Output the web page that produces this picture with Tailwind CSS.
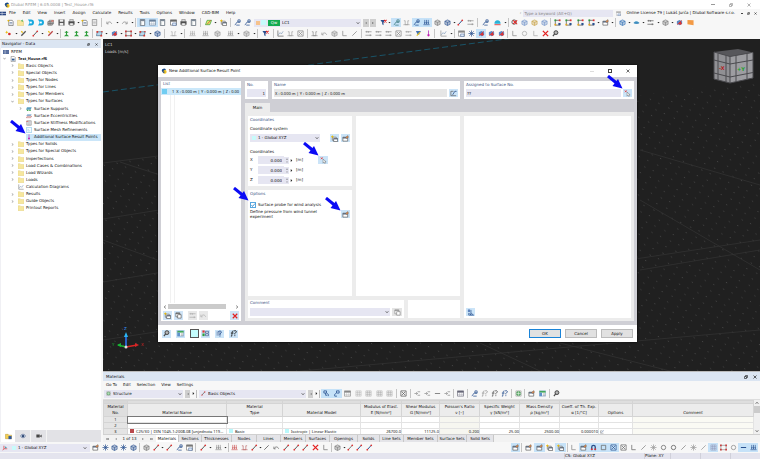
<!DOCTYPE html>
<html lang="en">
<head>
<meta charset="utf-8">
<title>Dlubal RFEM</title>
<script src="https://cdn.jsdelivr.net/npm/@tailwindcss/browser@4"></script>
</head>
<body class="flex h-screen flex-col overflow-hidden bg-[#f7f7f7] font-['DejaVu_Sans','Noto_Sans',sans-serif] text-[4px] leading-[6px] text-[#111]">
<svg class="hidden" aria-hidden="true">
  <symbol id="i-logo" viewBox="0 0 16 16"><path d="M2 6a6 5 0 0 1 11-2l-3 5-7 1z" fill="#174a86"/><circle cx="10" cy="10" r="5" fill="#f2c21b"/><path d="M4 4l4 1-2 4 4 1-2 4-4-3z" fill="#28508f"/></symbol>
  <symbol id="i-rfem" viewBox="0 0 20 14"><path d="M0 1h20v12H0z" fill="#294683"/><path d="M0 7h20M7 1v12" stroke="#fff" stroke-width="1.6"/></symbol>
  <symbol id="i-new" viewBox="0 0 16 16"><path d="M4 3h8l2 3v9H4z" fill="#fff" stroke="#555" stroke-width="1.4"/><path d="M6 8h6M6 11h6" stroke="#49658f" stroke-width="1.3"/><path d="M3 1l1 2 2 1-2 1-1 2-1-2-2-1 2-1z" fill="#e8b800"/></symbol>
  <symbol id="i-model" viewBox="0 0 16 16"><path d="M3 1h8l3 3v11H3z" fill="#fff" stroke="#555" stroke-width="1.2"/><path d="M5 7h7v5H5z" fill="#2e5b93"/></symbol>
  <symbol id="i-folder" viewBox="0 0 16 16"><path d="M1 3h6l2 2h6v10H1z" fill="#f8e6a0" stroke="#d9bf62"/><path d="M9 4l4-3v6z" fill="#45ad4b"/></symbol>
  <symbol id="i-data" viewBox="0 0 16 16"><path d="M1 3h6l2 2h6v8H1z" fill="#f2cf55" stroke="#b58c22"/><path d="M8 7h7v7H8z" fill="#2b57a0"/></symbol>
  <symbol id="i-dir" viewBox="0 0 16 14"><path d="M0 1h6l2 2h8v11H0z" fill="#f6e79f" stroke="#e2cd7c"/></symbol>
  <symbol id="i-sync" viewBox="0 0 16 16"><path d="M2 1h7a7 7 0 0 1 0 14H2l3-4V5z" fill="#19a9de"/><path d="M6 6h5v4H6z" fill="#fff"/></symbol>
  <symbol id="i-cube" viewBox="0 0 16 16"><path d="M2 5l6-3 6 3v7l-6 3-6-3z" fill="currentColor" fill-opacity=".35" stroke="currentColor" stroke-width="1.3"/><path d="M2 5l6 3 6-3M8 8v7" fill="none" stroke="currentColor" stroke-width="1.3"/></symbol>
  <symbol id="i-block" viewBox="0 0 16 16"><path d="M2 6h10v8H2z" fill="#ccc" stroke="#555" stroke-width="1.5"/><path d="M5 6V3h10v8h-3M2 10h10M7 6v8" fill="none" stroke="#555" stroke-width="1.4"/><path d="M10 3h5v3h-5z" fill="#e06b5c"/></symbol>
  <symbol id="i-save" viewBox="0 0 16 16"><path d="M1 1h14v14H1z" fill="#585858"/><path d="M4 1h8v5H4zM4 9h8v6H4z" fill="#eee"/></symbol>
  <symbol id="i-print" viewBox="0 0 16 16"><path d="M1 5h14v8H1z" fill="#505050"/><path d="M4 1h8v4H4zM4 9h8v6H4z" fill="#eee" stroke="#505050"/></symbol>
  <symbol id="i-page" viewBox="0 0 16 16"><path d="M3 1h10v14H3z" fill="#f8f8f8" stroke="#777" stroke-width="1.5"/><path d="M5 5h6M5 8h6M5 11h6" stroke="#888"/></symbol>
  <symbol id="i-undo" viewBox="0 0 16 16"><path d="M2 6v5h4M3 10c3-5 8-4 10 1" fill="none" stroke="currentColor" stroke-width="1.5"/></symbol>
  <symbol id="i-redo" viewBox="0 0 16 16"><path d="M14 6v5h-4M13 10c-3-5-8-4-10 1" fill="none" stroke="currentColor" stroke-width="1.5"/></symbol>
  <symbol id="i-tl" viewBox="0 0 16 16"><path d="M2 2h6v5H2zM9 8a4 4 0 0 1 3 6M6 7v5h4" fill="none" stroke="#28508f" stroke-width="1.8"/></symbol>
  <symbol id="i-tr" viewBox="0 0 16 16"><path d="M8 2h6v5H8zM7 8a4 4 0 0 0-3 6h5" fill="none" stroke="#28508f" stroke-width="1.8"/></symbol>
  <symbol id="i-panel" viewBox="0 0 16 16"><path d="M3 1h10v14H3z" fill="#fff" stroke="#5f6b78" stroke-width="1.8"/><path d="M3 1h10v4H3z" fill="#7b8795"/><path d="M6 6v8" stroke="#9aa" /></symbol>
  <symbol id="i-table" viewBox="0 0 16 16"><path d="M1 2h14v12H1z" fill="#fff" stroke="currentColor" stroke-width="1.5"/><path d="M1 2h14v4H1z" fill="currentColor"/><path d="M1 10h14M6 6v8M11 6v8" stroke="currentColor" stroke-opacity=".6"/></symbol>
  <symbol id="i-win" viewBox="0 0 16 16"><path d="M1 2h14v12H1z" fill="#fff" stroke="currentColor" stroke-width="1.6"/><path d="M1 2h14v4H1z" fill="currentColor"/><path d="M6 9h8v6H6z" fill="#dbe7f7" stroke="#2e5089"/></symbol>
  <symbol id="i-pencil" viewBox="0 0 16 16"><path d="M3 13L12 3" stroke="currentColor" stroke-width="2.2"/><circle cx="3" cy="13" r="2" fill="#d33"/><circle cx="12" cy="3" r="2" fill="#d33"/></symbol>
  <symbol id="i-member" viewBox="0 0 16 16"><path d="M3 13L13 3" stroke="currentColor" stroke-width="3"/><path d="M3 3l3 3" stroke="#e8b800" stroke-width="3"/></symbol>
  <symbol id="i-para" viewBox="0 0 16 16"><path d="M5 3h10l-4 10H1z" fill="#d7ef6a" stroke="#3c9a3c" stroke-width="1.6"/><path d="M5 12L13 3" stroke="#d33" stroke-width="1.6"/></symbol>
  <symbol id="i-node" viewBox="0 0 16 16"><circle cx="10" cy="9" r="3" fill="#d42a2a"/><path d="M4 1l1 3 3 1-3 1-1 3-1-3-3-1 3-1z" fill="#e8b800"/></symbol>
  <symbol id="i-area" viewBox="0 0 16 16"><path d="M3 4h11l-2 9H1z" fill="#b9d9ec" stroke="#39607f" stroke-width="1.4"/><path d="M1 2h4v4H1zM12 2h3v3h-3zM10 11h4v4h-4z" fill="#d53d34"/></symbol>
  <symbol id="i-support" viewBox="0 0 18 14"><path d="M3 2h14l-3 7H0z" fill="#5d9fc0"/><path d="M2 13l3-5 3 5zM9 13l3-5 3 5z" fill="#39a648"/></symbol>
  <symbol id="i-ecc" viewBox="0 0 18 14"><path d="M4 2h13l-3 5H1z" fill="#8db4d6"/><path d="M4 8h13l-3 4H1z" fill="none" stroke="#b04a4a" stroke-width="1.5"/></symbol>
  <symbol id="i-stiff" viewBox="0 0 16 16"><path d="M2 2h12v12H2z" fill="#e9e9ef" stroke="#777" stroke-width="1.3"/><path d="M6 2v12M10 2v12" stroke="#888"/><path d="M1 4h5" stroke="#d66" stroke-width="2"/></symbol>
  <symbol id="i-mesh" viewBox="0 0 16 16"><path d="M1 1h14v14H1z" fill="#f4fbff" stroke="#6fb6dd" stroke-width="1.4"/><path d="M5 5v6h5z" fill="none" stroke="#8fc4e2"/></symbol>
  <symbol id="i-frame" viewBox="0 0 16 16"><path d="M2 3h12v10H2z" fill="none" stroke="currentColor" stroke-width="1.5"/><path d="M0 1h4v4H0zM12 1h4v4h-4zM0 11h4v4H0zM12 11h4v4h-4z" fill="#c94141"/></symbol>
  <symbol id="i-load" viewBox="0 0 16 16"><path d="M1 13h14M4 2v8M8 2v8M12 2v8" stroke="currentColor" stroke-width="1.5"/><path d="M2 8l2 4 2-4zM6 8l2 4 2-4zM10 8l2 4 2-4z" fill="currentColor"/></symbol>
  <symbol id="i-green" viewBox="0 0 16 16"><path d="M8 2v9M4 5h8" stroke="#2f9e3c" stroke-width="2.4"/><path d="M2 14h12l-6-5z" fill="#2f9e3c"/></symbol>
  <symbol id="i-curve" viewBox="0 0 16 16"><path d="M2 4h3v9h6V4h3M1 13h14" fill="none" stroke="currentColor" stroke-width="1.5"/></symbol>
  <symbol id="i-dim" viewBox="0 0 16 16"><path d="M1 4h14M1 12h14M4 2v4M12 10v4M8 3v3" stroke="currentColor" stroke-width="1.6"/></symbol>
  <symbol id="i-filter" viewBox="0 0 16 16"><path d="M1 2h11L8 8v6l-3-2V8z" fill="currentColor"/><path d="M9 2l6 6M15 2L9 8" stroke="#e01f1f" stroke-width="2.4"/></symbol>
  <symbol id="i-redx" viewBox="0 0 16 16"><path d="M2 2l12 12M14 2L2 14" stroke="#e32020" stroke-width="3"/></symbol>
  <symbol id="i-zoomx" viewBox="0 0 16 16"><circle cx="7" cy="7" r="5" fill="none" stroke="#555" stroke-width="2"/><path d="M5 3l9 9M14 3L5 11" stroke="#e32020" stroke-width="2.4"/></symbol>
  <symbol id="i-dots" viewBox="0 0 16 16"><path d="M3 2v12M3 14h11M3 3h10" stroke="#444" stroke-width="1.5"/><path d="M1 1h4v4H1z" fill="#2f9e3c"/><path d="M11 1h4v4h-4z" fill="#d33"/><path d="M1 11h4v4H1z" fill="#e6a51b"/><path d="M10 9h5v5h-5z" fill="#28508f"/></symbol>
  <symbol id="i-diag" viewBox="0 0 16 16"><path d="M2 1v13h13" fill="none" stroke="currentColor" stroke-width="1.5"/><path d="M3 11l4-5 3 3 4-6" fill="none" stroke="#6a89ad" stroke-width="1.3"/></symbol>
  <symbol id="i-flag" viewBox="0 0 16 16"><path d="M2 14l5-7h7M5 14h8M9 2h5v5H9z" fill="none" stroke="currentColor" stroke-width="1.7"/></symbol>
  <symbol id="i-wing" viewBox="0 0 16 16"><path d="M1 9c4-5 9-5 14 0-4 3-10 3-14 0z" fill="#4aa0cd"/><path d="M3 9h10" stroke="#28508f"/></symbol>
  <symbol id="i-arch" viewBox="0 0 16 16"><path d="M1 11a7 8 0 0 1 14 0z" fill="#29b2d8"/><path d="M1 13h14" stroke="#d33" stroke-width="2"/></symbol>
  <symbol id="i-orange" viewBox="0 0 16 16"><path d="M1 2l14 1v11L1 12z" fill="#f39a45"/></symbol>
  <symbol id="i-pin" viewBox="0 0 16 16"><path d="M8 1v9" stroke="#c05bc8" stroke-width="2.4"/><circle cx="8" cy="12" r="2.6" fill="#c219b1"/></symbol>
  <symbol id="i-key" viewBox="0 0 16 16"><path d="M2 2h12l-4 5v3H6z" fill="#4372b5"/><path d="M4 13l8-8" stroke="#e6c21b" stroke-width="2.5"/></symbol>
  <symbol id="i-ball" viewBox="0 0 16 16"><path d="M2 5l6-3 6 3v6l-6 3-6-3z" fill="#5b86c0"/><path d="M3 13L13 3" stroke="#d33" stroke-width="2"/><circle cx="10" cy="10" r="3" fill="#d33"/></symbol>
  <symbol id="i-cursor" viewBox="0 0 16 16"><path d="M7 5v9l2-2 2 3 1-1-1-3h3z" fill="#fff" stroke="#555"/><path d="M2 1l4 4M6 1L2 5" stroke="#e03030" stroke-width="1.8"/></symbol>
  <symbol id="i-edit" viewBox="0 0 16 16"><path d="M2 3h6M2 3v10h12" fill="none" stroke="#555" stroke-width="1.5"/><path d="M6 11l5-8h4" fill="none" stroke="#2a4d86" stroke-width="1.8"/></symbol>
  <symbol id="i-wnew" viewBox="0 0 16 16"><path d="M3 5h9v7H3z" fill="#fff" stroke="#555" stroke-width="1.4"/><path d="M6 8h9v7H6z" fill="#fff" stroke="#444" stroke-width="1.4"/><path d="M6 8h9v2H6z" fill="#54657c"/><path d="M3 0l1 3 3 1-3 1-1 3-1-3-3-1 3-1z" fill="#e8b800"/></symbol>
  <symbol id="i-wedit" viewBox="0 0 16 16"><path d="M2 5h11v9H2z" fill="#fff" stroke="#555" stroke-width="1.5"/><path d="M2 5h11v3H2z" fill="#54657c"/><path d="M8 6l5-5 2 4-4 3z" fill="#d9884e" stroke="#555" stroke-width=".8"/></symbol>
  <symbol id="i-copy" viewBox="0 0 16 16"><path d="M2 2h9v9H2z" fill="#fff" stroke="currentColor" stroke-width="1.5"/><path d="M6 6h8v8H6z" fill="#fff" stroke="currentColor" stroke-width="1.5"/><path d="M2 2h9v2H2z" fill="currentColor"/></symbol>
  <symbol id="i-search" viewBox="0 0 16 16"><circle cx="9" cy="6" r="4.5" fill="#999" stroke="#444" stroke-width="2"/><path d="M6 9l-4 5" stroke="#444" stroke-width="2.6"/><path d="M9 4v4" stroke="#fff" stroke-width="1.4"/></symbol>
  <symbol id="i-units" viewBox="0 0 16 16"><path d="M1 2h14v12H1z" fill="#fff" stroke="#4b7db4"/><path d="M1 2h14v4H1z" fill="#42a85b"/><path d="M1 6h6v8H1z" fill="#5e92ca"/><path d="M9 9h5M9 12h5" stroke="#555"/></symbol>
  <symbol id="i-struct" viewBox="0 0 16 16"><path d="M1 1h5v5H1z" fill="#d33"/><path d="M1 8h5v6H1z" fill="#2f9e3c"/><path d="M8 3h7v4H8zM8 9h7v4H8z" fill="#fff" stroke="#2a4d86" stroke-width="1.5"/></symbol>
  <symbol id="i-help" viewBox="0 0 16 16"><path d="M1 3h10v10H1z" fill="#9ab2d0"/><path d="M5 5c1-4 9-3 7 1l-3 3v2M9 13v2" fill="none" stroke="#28508f" stroke-width="2"/></symbol>
  <symbol id="i-fx" viewBox="0 0 16 16"><path d="M8 2c-3-1-3 3-4 12H2M2 7h6" fill="none" stroke="currentColor" stroke-width="1.8"/><path d="M9 3c2-3 7-1 5 2l-3 3v2M11 12v2" fill="none" stroke="currentColor" stroke-width="2"/></symbol>
  <symbol id="i-sort" viewBox="0 0 16 16"><path d="M2 1h5v6H2z" fill="#5e83bd"/><path d="M9 2v11M6 10l3 4M4 9v5h11l-5-4" fill="none" stroke="#28508f" stroke-width="1.7"/></symbol>
  <symbol id="i-eye" viewBox="0 0 16 16"><path d="M1 8c4-6 10-6 14 0-4 6-10 6-14 0z" fill="#dce5f1" stroke="#2a4477" stroke-width="1.5"/><circle cx="8" cy="8" r="3" fill="#1e3766"/></symbol>
  <symbol id="i-cam" viewBox="0 0 16 16"><path d="M1 4h9v8H1zM11 7l4-3v8l-4-3z" fill="#444"/></symbol>
  <symbol id="i-xyz" viewBox="0 0 16 16"><path d="M5 2v8l-3 4M5 10h9" fill="none" stroke="#d33" stroke-width="1.8"/><path d="M7 3l6 3-4 4z" fill="#4a9fb7"/></symbol>
  <symbol id="i-star" viewBox="0 0 16 16"><path d="M8 1v14M1 8h14M3 3l10 10M13 3L3 13" stroke="currentColor" stroke-width="1.6"/></symbol>
  <symbol id="i-circ" viewBox="0 0 16 16"><circle cx="8" cy="8" r="5" fill="none" stroke="currentColor" stroke-width="1.7"/></symbol>
  <symbol id="i-sq" viewBox="0 0 16 16"><path d="M3 3h10v10H3z" fill="none" stroke="currentColor" stroke-width="1.7"/></symbol>
  <symbol id="i-boxx" viewBox="0 0 16 16"><path d="M2 2h12v12H2zM4 4l8 8M12 4l-8 8" fill="none" stroke="currentColor" stroke-width="1.6"/></symbol>
  <symbol id="i-grid" viewBox="0 0 16 16"><path d="M2 2h12v12H2zM2 6h12M2 10h12M6 2v12M10 2v12" fill="none" stroke="currentColor"/></symbol>
  <symbol id="i-magnet" viewBox="0 0 16 16"><path d="M4 14V7a4 4 0 0 1 8 0v7" fill="none" stroke="#2a4d86" stroke-width="3"/><path d="M2 12h4M10 12h4" stroke="#d33" stroke-width="3"/></symbol>
  <symbol id="i-corner" viewBox="0 0 16 16"><path d="M4 2v11h9" fill="none" stroke="currentColor" stroke-width="1.7"/></symbol>
  <symbol id="i-slash" viewBox="0 0 16 16"><path d="M3 13L13 3" stroke="currentColor" stroke-width="1.8"/></symbol>
  <symbol id="i-ins" viewBox="0 0 16 16"><path d="M1 8h7M8 4h6M8 12h6M5 5l3 3-3 3" fill="none" stroke="currentColor" stroke-width="1.6"/></symbol>
  <symbol id="i-dash" viewBox="0 0 16 16"><path d="M2 8h12" stroke="currentColor" stroke-width="2.4"/></symbol>
  <symbol id="i-globe" viewBox="0 0 16 16"><path d="M2 2h12v12H2z" fill="#fff" stroke="#777"/><circle cx="8" cy="8" r="5" fill="#63b16e" stroke="#347a40"/><path d="M3 8h10M8 3v10" stroke="#fff"/></symbol>
  <symbol id="i-down" viewBox="0 0 8 8"><path d="M1 2.500h6L4 6z" fill="#222"/></symbol>
  <symbol id="i-left" viewBox="0 0 8 8"><path d="M6 0v8L2 4z" fill="#444"/></symbol>
  <symbol id="i-right" viewBox="0 0 8 8"><path d="M2 0v8l4-4z" fill="#222"/></symbol>
  <symbol id="i-first" viewBox="0 0 12 8"><path d="M6 0v8L2 4zM11 0v8L7 4zM0 0h1v8H0z" fill="#444"/></symbol>
  <symbol id="i-last" viewBox="0 0 12 8"><path d="M1 0v8l4-4zM6 0v8l4-4zM11 0h1v8h-1z" fill="#444"/></symbol>
  <symbol id="i-chev" viewBox="0 0 8 8"><path d="M1 2l3 4 3-4" fill="none" stroke="#555" stroke-width="1.200"/></symbol>
  <symbol id="i-x" viewBox="0 0 8 8"><path d="M1 1l6 6M7 1L1 7" stroke="currentColor" stroke-width="1.300"/></symbol>
  <symbol id="i-rest" viewBox="0 0 8 8"><path d="M1 3h4v4H1zM3 3V1h4v4H5" fill="none" stroke="currentColor" stroke-width="1.200"/></symbol>
  <symbol id="i-arrow" viewBox="0 0 16 14"><path d="M1 1l8.500 7" stroke="#0b0bf5" stroke-width="3"/><path d="M15.500 13.500L5.500 11l5.500-7z" fill="#0b0bf5"/></symbol>
</svg>

<header>
  <div class="flex h-[9px] items-center bg-white px-1 text-[#999]">
    <svg class="mr-px size-[6px]"><use href="#i-logo"/></svg>
    <h1 class="grow">Dlubal RFEM | 6.05.0008 | Test_House.rf6</h1>
    <div class="flex items-center gap-[14px] pr-[5px] text-[#888]">
      <button aria-label="Minimize" class="h-px w-[4px] bg-[#999]"></button>
      <button aria-label="Restore"><svg class="size-[4px]"><use href="#i-rest"/></svg></button>
      <button aria-label="Close"><svg class="size-[4px]"><use href="#i-x"/></svg></button>
    </div>
  </div>
  <nav class="flex h-[8px] items-center">
    <svg class="mr-[3px] h-[5px] w-[6px]"><use href="#i-rfem"/></svg>
    <div class="flex grow gap-[7px]" id="menu"></div>
    <span class="mr-[2px] text-[#888]">›</span>
    <input aria-label="Keyword search" placeholder="Type a keyword (Alt+Q)" class="mr-[3px] h-[7px] w-[90px] bg-[#e6e6f2] px-px placeholder:text-[#888]">
    <svg class="mr-[5px] size-[5px] text-[#aaa]"><use href="#i-win"/></svg>
    <span class="mr-[6px]">Online License 79 | Lukáš Jurča | Dlubal Software s.r.o.</span>
    <div class="flex items-center gap-[4px] pr-[3px]">
      <span class="h-px w-[2px] bg-[#444]"></span>
      <svg class="size-[3px]"><use href="#i-rest"/></svg>
      <svg class="size-[3px]"><use href="#i-x"/></svg>
    </div>
  </nav>
  <div class="flex h-[11px] items-center pl-1">
    <div class="contents" data-bar="top1"></div>
    <div class="relative mr-[2px] flex h-[8px] w-[107px] items-center bg-[#e6e6f2] pl-[2px]">
      <i class="size-[4px] bg-[#f5c28c]"></i><i class="ml-px size-[5px] bg-[#c8fbfb]"></i>
      <b class="mx-[2px] h-[6px] w-[12px] bg-[#12ab50] text-center font-normal text-white">Qw</b>
      <select aria-label="Load case" class="grow appearance-none"><option>LC1</option></select>
      <svg class="pointer-events-none absolute right-px size-[4px]"><use href="#i-chev"/></svg>
    </div>
    <div class="mr-px flex gap-px">
      <button aria-label="Previous load case" class="flex h-[8px] w-[6px] items-center justify-center bg-[#cfcfcf]"><svg class="size-[2px]"><use href="#i-left"/></svg></button>
      <button aria-label="Next load case" class="flex h-[8px] w-[6px] items-center justify-center bg-[#cfcfcf]"><svg class="size-[2px]"><use href="#i-right"/></svg></button>
    </div>
    <div class="contents" data-bar="top1b"></div>
  </div>
  <div class="flex h-[11px] items-center pl-[2px]" data-bar="top2"></div>
</header>

<main class="flex min-h-0 grow gap-[2px]">
  <aside class="flex w-[101px] shrink-0 flex-col border-t border-[#ccc] bg-[#f0f0f4] pl-px">
    <div class="flex h-[8px] shrink-0 items-center bg-[#dbe5f2] px-px">
      <h2 class="grow">Navigator - Data</h2>
      <svg class="mr-[5px] size-[3px]"><use href="#i-rest"/></svg>
      <svg class="mr-[2px] size-[3px]"><use href="#i-x"/></svg>
    </div>
    <div class="grow bg-white">
      <ul id="tree" class="grid h-[164px] auto-rows-fr"></ul>
    </div>
    <div class="flex h-[12px] shrink-0 bg-[#e2e2e6]">
      <button aria-label="Data" class="flex w-[14px] items-center justify-center bg-white"><svg class="size-[7px]"><use href="#i-data"/></svg></button>
      <button aria-label="Display" class="flex w-[16px] items-center justify-center border-r border-[#f4f4f4]"><svg class="size-[6px]"><use href="#i-eye"/></svg></button>
      <button aria-label="Views" class="flex w-[16px] items-center justify-center border-r border-[#f4f4f4]"><svg class="size-[6px]"><use href="#i-cam"/></svg></button>
    </div>
  </aside>

  <div class="flex min-w-0 grow flex-col">
    <section aria-label="Work area" class="relative min-h-0 grow overflow-hidden bg-[#202020]">
      <div class="absolute left-[2px] top-[2px] leading-[7px] text-[#ccc]">LC1<br>Loads [m/s]</div>
      <svg class="size-full" viewBox="103 39 657 332" preserveAspectRatio="xMinYMin slice">
        <defs><pattern id="pts" width="13" height="11" patternUnits="userSpaceOnUse" patternTransform="rotate(-8) skewX(20)"><path d="M2 2h1M8 7h1" stroke="#505050" stroke-width=".8"/></pattern></defs>
        <path d="M103 163L760 80V371H103z" fill="url(#pts)"/>
        <path d="M103 163l55-7M120 162l40 13M103 219l56-9M103 282l60-10M103 340l657-100M103 240l60 22M300 371L760 330M480 343l60 28M560 343l110 28M640 200l120 70M640 270l120-20M640 150l120 35" fill="none" stroke="#323232" stroke-width=".8"/>
        <path d="M103 92L510 38.500" stroke="#186078" stroke-width=".8" stroke-dasharray="6 3"/>
        <path d="M126 346v-11" stroke="#2a7bff" stroke-width="1.500"/><path d="M126 332l2 5h-4z" fill="#2ab6f5"/>
        <path d="M126 347l-8-2" stroke="#18b435" stroke-width="1.500"/><path d="M117 345l4-2v4z" fill="#18b435"/>
        <path d="M126 347l11-2" stroke="#d92525" stroke-width="1.500"/><path d="M139 345l-4-2v4z" fill="#d92525"/>
        <circle cx="126" cy="347" r="1.500" fill="#ddd"/>
        <g font-size="4"><text x="124" y="330" fill="#3894ff">Z</text><text x="112" y="346" fill="#18b435">Y</text><text x="141" y="346" fill="#d92525">X</text></g>
        <path d="M714 52l24-3 15 3.500-23 4z" fill="#57575b"/>
        <path d="M714 52l16 4.500V83l-16-4z" fill="#909094"/><path d="M730 56.500l23-4V78l-23 5z" fill="#9d9da1"/>
        <path d="M714 52l16 4.500 22-4M730 56.500V83M718 53.500V80M726 55.500V82M736 55.500V81.500M747 53.500V79.500M714 60l16 4 23-4M714 73l16 4 23-4.500M714 52v27l16 4 23-5V52.500" fill="none" stroke="#4b4b4f"/>
        <g font-size="5" font-weight="700"><text x="719" y="70" fill="#b42222">-X</text><text x="737" y="71" fill="#16a325">+Y</text></g>
      </svg>
    </section>

    <section class="flex h-[71px] shrink-0 flex-col border-t border-[#bbb]">
      <div class="flex h-[9px] shrink-0 items-center bg-[#dbe5f2] px-[3px]">
        <h2 class="grow">Materials</h2>
        <svg class="mr-[5px] size-[4px]"><use href="#i-rest"/></svg>
        <svg class="size-[4px]"><use href="#i-x"/></svg>
      </div>
      <div class="flex h-[7px] shrink-0 items-center gap-[6px] px-[3px]" id="tmenu"></div>
      <div class="flex h-[11px] shrink-0 items-center pl-px">
        <div class="relative mr-[2px] flex h-[8px] w-[79px] items-center bg-[#e6e6f2] pl-[2px]">
          <svg class="mr-[2px] size-[5px]"><use href="#i-globe"/></svg>
          <select aria-label="Table category" class="grow appearance-none"><option>Structure</option></select>
          <svg class="pointer-events-none absolute right-px size-[4px]"><use href="#i-chev"/></svg>
        </div>
        <button aria-label="Previous category" class="flex h-[8px] w-[5px] items-center justify-center bg-[#cfcfcf]"><svg class="size-[2px]"><use href="#i-left"/></svg></button>
        <button aria-label="Next category" class="flex h-[8px] w-[7px] items-center justify-center border-r border-[#bbb]"><svg class="size-[3px]"><use href="#i-right"/></svg></button>
        <div class="relative mx-[2px] flex h-[8px] w-[107px] items-center bg-[#e6e6f2] pl-[2px]">
          <svg class="mr-[2px] size-[5px] text-[#555]"><use href="#i-pencil"/></svg>
          <select aria-label="Table" class="grow appearance-none"><option>Basic Objects</option></select>
          <svg class="pointer-events-none absolute right-px size-[4px]"><use href="#i-chev"/></svg>
        </div>
        <button aria-label="Previous table" class="flex h-[8px] w-[5px] items-center justify-center bg-[#cfcfcf]"><svg class="size-[2px]"><use href="#i-left"/></svg></button>
        <button aria-label="Next table" class="flex h-[8px] w-[7px] items-center justify-center border-r border-[#bbb]"><svg class="size-[3px]"><use href="#i-right"/></svg></button>
        <div class="contents" data-bar="tbl"></div>
      </div>
      <div class="flex min-h-0 grow overflow-hidden border-t border-[#ddd] bg-white">
        <div class="min-w-0 grow overflow-hidden">
        <table class="w-full table-fixed border-collapse text-center [&_td]:border [&_td]:border-[#e3e3e3] [&_td]:p-0 [&_th]:whitespace-nowrap [&_th]:border [&_th]:border-[#d4d4d4] [&_th]:p-0 [&_th]:align-bottom [&_th]:font-normal">
          <colgroup><col class="w-[24px]"><col class="w-[99px]"><col class="w-[56px]"><col class="w-[78px]"><col class="w-[41px]"><col class="w-[38px]"><col class="w-[40px]"><col class="w-[40px]"><col class="w-[40px]"><col class="w-[39px]"><col class="w-[34px]"><col></colgroup>
          <thead class="bg-[#ececec]">
            <tr class="h-[3px] bg-[#dedede] leading-[2px]"><th class="bg-[#d8d8d8]"></th><th></th><th></th><th></th><th></th><th></th><th></th><th></th><th></th><th></th><th></th><th></th></tr>
            <tr class="leading-[6px]"><th class="bg-[#dedede]">Material<br>No.</th><th>Material Name</th><th>Material<br>Type</th><th>Material Model</th><th>Modulus of Elast.<br>E [N/mm²]</th><th>Shear Modulus<br>G [N/mm²]</th><th>Poisson's Ratio<br>ν [–]</th><th>Specific Weight<br>γ [kN/m³]</th><th>Mass Density<br>ρ [kg/m³]</th><th>Coeff. of Th. Exp.<br>α [1/°C]</th><th>Options</th><th>Comment</th></tr>
          </thead>
          <tbody class="font-['Noto_Sans',sans-serif]">
            <tr class="h-[6px] leading-[5px]"><th class="bg-[#e4e4e4]">1</th><td class="outline outline-[#777]"></td><td></td><td></td><td></td><td></td><td class="bg-[#f6f6f0]"></td><td></td><td></td><td></td><td></td><td class="bg-[#fafaf4]"></td></tr>
            <tr class="h-[6px] leading-[5px]"><th class="bg-[#e4e4e4]">2</th><td></td><td></td><td></td><td></td><td></td><td class="bg-[#f6f6f0]"></td><td></td><td></td><td></td><td></td><td class="bg-[#fafaf4]"></td></tr>
            <tr class="h-[6px] leading-[5px]"><th class="bg-[#e4e4e4]">3</th>
              <td class="overflow-hidden whitespace-nowrap text-left"><i class="mx-[2px] inline-block size-[4px] bg-[#b9494c]"></i>C25/30 | DIN 1045-1:2008-08 [unjednota 119...</td>
              <td class="text-left"><i class="mx-[2px] inline-block size-[4px] bg-[#b9f8fb]"></i>Basic</td>
              <td class="text-left"><i class="mx-[2px] inline-block size-[4px] bg-[#b9f8fb]"></i>Isotropic | Linear Elastic</td>
              <td class="text-right">26700.0</td><td class="text-right">11125.0</td><td class="bg-[#f6f6f0] text-right">0.200</td><td class="text-right">25.00</td><td class="text-right">2500.00</td><td class="text-right">0.000010</td><td><svg class="ml-px size-[4px]"><use href="#i-edit"/></svg></td><td class="bg-[#fafaf4]"></td></tr>
          </tbody>
        </table>
        </div>
        <div class="flex w-[7px] flex-col items-center bg-[#f0f0f0] py-px">
          <svg class="size-[4px] rotate-180"><use href="#i-chev"/></svg>
          <div class="mt-px h-[7px] w-[6px] bg-[#cbcbcb]"></div>
          <div class="grow"></div>
          <svg class="size-[4px]"><use href="#i-chev"/></svg>
        </div>
      </div>
      <div class="flex h-[8px] shrink-0 items-center border-t border-[#d0d0d0] bg-[#f2f2f2]">
        <div class="flex w-[53px] items-center justify-between px-[3px]"><svg class="h-[2px] w-[3px]"><use href="#i-first"/></svg><svg class="size-[2px]"><use href="#i-left"/></svg><span>1 of 13</span><svg class="size-[2px]"><use href="#i-right"/></svg><svg class="h-[2px] w-[3px]"><use href="#i-last"/></svg></div>
        <div class="flex" id="tabs"></div>
      </div>
    </section>
  </div>
</main>

<footer>
  <div class="flex h-[11px] items-center">
    <div class="relative flex h-[8px] w-[90px] items-center bg-[#e6e6f2] pl-[2px]">
      <svg class="mr-[4px] size-[6px]"><use href="#i-xyz"/></svg><i class="mr-[2px] size-[4px] bg-[#c8fbfb]"></i>
      <select aria-label="Coordinate system in use" class="grow appearance-none"><option>1 - Global XYZ</option></select>
      <svg class="pointer-events-none absolute right-[3px] size-[4px]"><use href="#i-chev"/></svg>
    </div>
    <div class="contents" data-bar="bot"></div>
    <div class="grow"></div>
    <div class="contents" data-bar="botr"></div>
  </div>
  <div class="flex h-[6px] items-center bg-[#e4e4ee]">
    <div class="grow"></div>
    <span class="w-[80px] border-l border-[#d0d0da]">CS: Global XYZ</span>
    <span class="w-[26px] border-l border-[#d0d0da]">Plane: XY</span>
    <span class="h-[6px] w-[30px] border-l border-[#d0d0da]"></span>
    <span class="h-[6px] w-[30px] border-l border-[#d0d0da]"></span>
    <span class="h-[6px] w-[30px] border-l border-[#d0d0da]"></span>
  </div>
</footer>

<section role="dialog" aria-labelledby="dlg" class="absolute left-[158px] right-[123px] top-[65px] flex h-[277px] flex-col bg-white shadow-[0_0_2px_#000]">
  <div class="flex h-[12px] shrink-0 items-center px-[3px]">
    <svg class="mr-[2px] size-[6px]"><use href="#i-logo"/></svg>
    <h2 id="dlg" class="grow">New Additional Surface Result Point</h2>
    <div class="flex items-center gap-[14px] pr-[4px] text-[#222]">
      <button aria-label="Minimize" class="h-px w-[4px] bg-[#ddd]"></button>
      <button aria-label="Maximize" class="size-[4px] border border-[#444]"></button>
      <button aria-label="Close"><svg class="size-[4px]"><use href="#i-x"/></svg></button>
    </div>
  </div>
  <div class="flex min-h-0 grow gap-[4px] bg-[#cfcfd5] px-[3px] py-[4px]">
    <div class="flex w-[80px] shrink-0 flex-col bg-white">
      <h3 class="h-[7px] px-[2px] text-[#3b5382]">List</h3>
      <div class="flex h-[7px] items-center overflow-hidden whitespace-nowrap bg-[#cbe8fa] pl-px font-['Noto_Sans',sans-serif]"><i class="mr-[5px] size-[5px] shrink-0 bg-[#71cdf2]"></i><span class="mr-[2px]">1</span>X : 0.000 m | Y : 0.000 m | Z : 0.00</div>
      <div class="ml-[9px] w-[5px] grow border-x border-[#f1f1f1]"></div>
      <div class="flex h-[7px] items-center gap-px px-[2px]">
        <svg class="size-[4px] rotate-90"><use href="#i-chev"/></svg><div class="h-[5px] w-[58px] bg-[#cbcbcb]"></div><div class="grow"></div><svg class="size-[4px] -rotate-90"><use href="#i-chev"/></svg>
      </div>
      <div class="flex h-[11px] items-center gap-[2px] px-[2px] text-[#555]">
        <button aria-label="New point" class="flex size-[9px] items-center justify-center bg-[#cfe4f7]"><svg class="size-[7px]"><use href="#i-wnew"/></svg></button>
        <button aria-label="Copy point" class="flex size-[9px] items-center justify-center bg-[#cfe4f7]"><svg class="size-[7px]"><use href="#i-copy"/></svg></button>
        <button aria-label="Merge" class="ml-[3px] flex size-[9px] items-center justify-center bg-[#e8e8e8] text-[#aaa]"><svg class="size-[7px]"><use href="#i-dim"/></svg></button>
        <button aria-label="Split" class="flex size-[9px] items-center justify-center bg-[#e8e8e8] text-[#aaa]"><svg class="size-[7px]"><use href="#i-undo"/></svg></button>
        <div class="grow"></div>
        <button aria-label="Delete" class="flex size-[9px] items-center justify-center bg-[#cfe4f7]"><svg class="size-[6px]"><use href="#i-redx"/></svg></button>
      </div>
    </div>
    <div class="flex min-w-0 grow flex-col">
      <div class="flex h-[18px] shrink-0 gap-[4px]">
        <div class="w-[23px] bg-white px-[2px]"><label for="no" class="block h-[8px] leading-[8px] text-[#3b5382]">No.</label><input id="no" value="1" class="block h-[8px] w-full bg-[#e6e6f2] px-px text-right"></div>
        <div class="grow bg-white px-[2px]"><label for="nm" class="block h-[8px] leading-[8px] text-[#3b5382]">Name</label>
          <div class="flex gap-[2px]"><input id="nm" value="X : 0.000 m | Y : 0.000 m | Z : 0.000 m" class="h-[8px] min-w-0 grow bg-[#e6e6e6] px-px font-['Noto_Sans',sans-serif]"><button aria-label="Edit name" class="flex h-[8px] w-[9px] items-center justify-center bg-[#cbe4f8]"><svg class="size-[7px]"><use href="#i-edit"/></svg></button></div></div>
        <div class="w-[170px] bg-white px-[2px]"><label for="as" class="block h-[8px] leading-[8px] text-[#3b5382]">Assigned to Surface No.</label>
          <div class="flex gap-[2px]"><input id="as" value="??" class="h-[8px] min-w-0 grow bg-[#e6e6f2] px-px"><button aria-label="Select surfaces" class="flex h-[8px] w-[9px] items-center justify-center bg-[#cbe4f8]"><svg class="size-[7px]"><use href="#i-cursor"/></svg></button></div></div>
      </div>
      <button class="mt-[4px] h-[9px] w-[25px] shrink-0 bg-[#ececec]">Main</button>
      <div class="flex min-h-0 grow gap-[4px] bg-[#ececec] px-[3px] pb-[3px] pt-[4px]">
        <div class="grid min-w-0 grow grid-cols-[104px_minmax(0,1fr)] grid-rows-[1fr_18px] gap-[4px]">
          <div class="flex flex-col gap-[4px]">
            <fieldset class="h-[70px] bg-white px-[2px]">
              <legend class="float-left h-[7px] w-full leading-[7px] text-[#3b5382]">Coordinates</legend>
              <div class="clear-both pt-[3px]">
                <label for="cs" class="block h-[8px]">Coordinate system</label>
                <div class="flex h-[8px] items-center">
                  <div class="relative flex h-[8px] w-[70px] items-center bg-[#e6e6f2] pl-[2px]"><i class="mr-[2px] size-[4px] bg-[#c8fbfb]"></i><select id="cs" class="grow appearance-none"><option>1 - Global XYZ</option></select><svg class="pointer-events-none absolute right-px size-[4px]"><use href="#i-chev"/></svg></div>
                  <div class="grow"></div>
                  <button aria-label="New coordinate system" class="mr-[2px] flex h-[8px] w-[9px] items-center justify-center bg-[#cbe4f8]"><svg class="size-[7px]"><use href="#i-wnew"/></svg></button>
                  <button aria-label="Edit coordinate system" class="flex h-[8px] w-[9px] items-center justify-center bg-[#cbe4f8]"><svg class="size-[7px]"><use href="#i-wedit"/></svg></button>
                </div>
                <div class="mb-px mt-[7px] h-[6px]">Coordinates</div>
                <div class="flex">
                  <div class="flex flex-col gap-[2px]" id="coords"></div>
                  <button aria-label="Pick point" class="ml-[15px] flex h-[8px] w-[10px] items-center justify-center bg-[#cbe4f8]"><svg class="size-[7px]"><use href="#i-cursor"/></svg></button>
                </div>
              </div>
            </fieldset>
            <fieldset class="grow bg-white px-[2px]">
              <legend class="float-left h-[7px] w-full leading-[8px] text-[#3b5382]">Options</legend>
              <div class="clear-both pt-[4px]">
                <label class="flex h-[8px] items-center gap-[2px]"><span class="relative flex"><input type="checkbox" checked class="size-[6px] appearance-none border border-[#5aa8e0] bg-white"><svg class="pointer-events-none absolute inset-0 size-[6px]" viewBox="0 0 12 12"><path d="M3 6l2 3 5-6" fill="none" stroke="#1c7ac4" stroke-width="1.5"/></svg></span>Surface probe for wind analysis</label>
                <div class="flex items-center justify-between"><p class="w-[76px] leading-[5px]">Define pressure from wind tunnel experiment</p><button aria-label="Define pressure" class="flex h-[8px] w-[9px] items-center justify-center bg-[#cbe4f8]"><svg class="size-[7px]"><use href="#i-wedit"/></svg></button></div>
              </div>
            </fieldset>
          </div>
          <div class="bg-white"></div>
          <div class="col-span-2 flex gap-[4px]">
            <div class="grow bg-white px-[2px]"><label for="cm" class="block h-[8px] text-[#3b5382]">Comment</label>
              <div class="flex gap-[2px]"><div class="relative flex h-[8px] grow items-center bg-[#e6e6f2]"><select id="cm" class="w-full appearance-none"><option></option></select><svg class="pointer-events-none absolute right-px size-[4px]"><use href="#i-chev"/></svg></div><button aria-label="Apply comment" class="flex h-[8px] w-[10px] items-center justify-center bg-[#e4e4e4] text-[#888]"><svg class="size-[7px]"><use href="#i-copy"/></svg></button></div></div>
            <div class="w-[52px] bg-white"></div>
          </div>
        </div>
        <div class="flex w-[167px] items-end bg-white p-[2px]"><button aria-label="Sort" class="flex h-[8px] w-[9px] items-center justify-center bg-[#cbe4f8]"><svg class="size-[7px]"><use href="#i-sort"/></svg></button></div>
      </div>
    </div>
  </div>
  <div class="flex h-[17px] shrink-0 items-center px-[4px]">
    <div class="flex grow items-center gap-[5px]">
      <button aria-label="Help search" class="flex h-[8px] w-[9px] items-center justify-center bg-[#cbe4f8]"><svg class="size-[7px]"><use href="#i-search"/></svg></button>
      <button aria-label="Units" class="flex h-[8px] w-[9px] items-center justify-center bg-[#cbe4f8]"><svg class="size-[7px]"><use href="#i-units"/></svg></button>
      <div class="flex items-center gap-[2px]"><button aria-label="Color" class="size-[9px] border border-[#555] bg-[#c4fdfd]"></button>
      <button aria-label="Structure" class="flex h-[8px] w-[9px] items-center justify-center bg-[#cbe4f8]"><svg class="size-[7px]"><use href="#i-struct"/></svg></button></div>
      <button aria-label="Info" class="flex h-[8px] w-[9px] items-center justify-center bg-[#cbe4f8]"><svg class="size-[7px]"><use href="#i-help"/></svg></button>
      <button aria-label="Formula" class="flex h-[8px] w-[9px] items-center justify-center bg-[#cbe4f8]"><svg class="size-[7px]"><use href="#i-fx"/></svg></button>
    </div>
    <div class="flex gap-[4px]">
      <button class="h-[9px] w-[32px] border border-[#1a83d8] bg-[#e1e1e1] leading-[6px]">OK</button>
      <button class="h-[9px] w-[32px] border border-[#bbb] bg-[#e1e1e1] leading-[6px]">Cancel</button>
      <button class="h-[9px] w-[32px] border border-[#bbb] bg-[#e1e1e1] leading-[6px]">Apply</button>
    </div>
  </div>
</section>

<svg class="pointer-events-none absolute left-[10px] top-[120px] h-[14px] w-[16px]"><use href="#i-arrow"/></svg>
<svg class="pointer-events-none absolute left-[303px] top-[142px] h-[14px] w-[16px]"><use href="#i-arrow"/></svg>
<svg class="pointer-events-none absolute left-[233px] top-[187px] h-[14px] w-[16px]"><use href="#i-arrow"/></svg>
<svg class="pointer-events-none absolute left-[325px] top-[197px] h-[14px] w-[16px]"><use href="#i-arrow"/></svg>
<svg class="pointer-events-none absolute right-[137px] top-[75px] h-[14px] w-[16px]"><use href="#i-arrow"/></svg>

<script>
const $ = s => document.querySelector(s);
// Toolbar groups: [width, "icon icon ..."]. "v" is a drop-down marker, a leading "*" marks an active tool, a trailing colour tints the icon.
const bars = {
  top1: [[98,'new folder sync sync block save print v new page'],[34,'undo:#777 v redo:#777 v'],[65,'*panel *table:#69809b panel win:#666 print panel'],[30,'para v wnew'],[23,'flag:#28508f flag:#28508f']],
  top1b: [[101,'filter:#28508f v *flag:#3a7a80 curve:#999 *flag:#28508f *load:#28508f cube:#777 cube:#28508f v pencil:#28508f dim:#888'],[31,'flag:#28508f arch v'],[42,'zoomx cube:#6f93c9 cube:#c79f40 cube:#6f93c9'],[65,'dots dots dots dots v wedit v'],[82,'cube:#2d6db5 v wing v dim:#555 v cube:#777 v ball orange']],
  top2: [[59,'node v member:#555 pencil:#555 v member:#b44 v'],[32,'green green green'],[72,'area v ball v frame:#555 v area v cube:#28508f'],[20,'curve:#aaa v'],[73,'load:#aaa load:#999 cube:#999 load:#999 v cube:#999 v'],[16,'filter:#28508f'],[34,'diag:#555 curve:#999 boxx:#888'],[54,'curve:#888 undo:#888 cube:#999 corner:#888 slash:#888'],[73,'dim:#888 dim:#888 dim:#888 boxx:#888 dim:#999 key pin'],[20,'diag:#888 v'],[53,'win:#888 star:#28508f *ball ball ball'],[55,'corner:#888 circ:#aaa corner:#aaa redx search']],
  tbl: [[77,'*tl *tr table:#888 grid:#aaa grid:#999 grid:#999 grid:#999'],[14,'boxx:#555'],[43,'ins:#888 ins:#888 dash:#888 ins:#888'],[14,'table:#667'],[44,'flag:#28508f fx:#999 fx:#555 fx:#28508f'],[13,'globe'],[25,'wedit units'],[13,'search']],
  bot: [[50,'wedit:#555 star:#28508f cube:#28508f star:#28508f cube:#28508f'],[56,'cube:#777 pencil:#555 v pencil:#555 flag:#28508f win:#777'],[33,'pencil:#555 v load:#888 v'],[103,'load:#c55 curve:#b66 pencil:#555 v slash:#555 undo:#555 pencil:#555 pencil:#555 pencil:#555 redx corner:#777'],[44,'cube:#777 v pencil:#777 pencil:#28508f pencil:#28508f']],
  botr: [[12,'*wedit'],[46,'wedit *wedit wnew *wnew'],[192,'corner:#888 *wedit *magnet *sq:#666 *boxx:#28508f boxx:#666 corner:#666 slash:#888 star:#999 circ:#666 circ:#555 slash:#888 star:#999 slash:#999 *grid:#88a frame:#888 circ:#888 *dash:#28508f *load:#28508f']]
};
for (const [key, groups] of Object.entries(bars)) {
  $(`[data-bar=${key}]`).innerHTML = groups.map(([w, items]) =>
    `<div class="flex h-[9px] shrink-0 items-center justify-between border-r border-[#c4c4c4] px-px last:border-transparent" style="width:${w}px">` +
    items.split(' ').map(t => {
      if (t === 'v') return '<button aria-label="More options"><svg class="size-[3px]"><use href="#i-down"/></svg></button>';
      const on = t[0] === '*', [name, color] = t.replace('*', '').split(':');
      return `<button aria-label="${name}" class="flex h-[9px] min-w-0 grow items-center justify-center ${on ? 'bg-[#c6e2f8]' : ''}" style="color:${color || '#555'}"><svg class="size-[7px]"><use href="#i-${name}"/></svg></button>`;
    }).join('') + '</div>').join('');
}
const links = a => a.map(t => `<a href="#">${t}</a>`).join('');
$('#menu').innerHTML = links(['File','Edit','View','Insert','Assign','Calculate','Results','Tools','Options','Window','CAD-BIM','Help']);
$('#tmenu').innerHTML = links(['Go To','Edit','Selection','View','Settings']);

// Tree rows: [level, expander, icon, label]
const rows = [[0,'','rfem','RFEM'],[0,'v','model','Test_House.rf6'],[1,'>','dir','Basic Objects'],[1,'>','dir','Special Objects'],[1,'>','dir','Types for Nodes'],[1,'>','dir','Types for Lines'],[1,'>','dir','Types for Members'],[1,'v','dir','Types for Surfaces'],[2,'>','support','Surface Supports'],[2,'','ecc','Surface Eccentricities'],[2,'','stiff','Surface Stiffness Modifications'],[2,'','mesh','Surface Mesh Refinements'],[2,'','pin','Additional Surface Result Points'],[1,'>','dir','Types for Solids'],[1,'>','dir','Types for Special Objects'],[1,'>','dir','Imperfections'],[1,'>','dir','Load Cases &amp; Combinations'],[1,'>','dir','Load Wizards'],[1,'>','dir','Loads'],[1,'','diag','Calculation Diagrams'],[1,'>','dir','Results'],[1,'>','dir','Guide Objects'],[1,'','dir','Printout Reports']];
const pad = ['pl-[2px]','pl-[10px]','pl-[18px]'];
$('#tree').innerHTML = rows.map(([l, e, i, t], n) => {
  const ex = n === 0 ? '' : `<span class="mr-[3px] w-[4px] shrink-0">${e ? `<svg class="size-[3px] ${e === '>' ? '-rotate-90' : ''}"><use href="#i-chev"/></svg>` : ''}</span>`;
  return `<li class="flex min-h-0 items-center whitespace-nowrap ${pad[l]}">${ex}<span class="flex h-full grow items-center ${n === 12 ? 'bg-[#cbe6f9]' : ''}"><svg class="mr-[2px] size-[6px] shrink-0 text-[#777]"><use href="#i-${i}"/></svg><span class="${n === 1 ? "font-['Noto_Sans',sans-serif] font-bold" : ''}">${t}</span></span></li>`;
}).join('');

$('#tabs').innerHTML = [['Materials',23],['Sections',23],['Thicknesses',30],['Nodes',25],['Lines',24],['Members',25],['Surfaces',24],['Openings',28],['Solids',22],['Line Sets',24],['Member Sets',34],['Surface Sets',29],['Solid Sets',27]].map(([t, w], i) =>
  `<button class="h-[7px] whitespace-nowrap border-r border-[#c8c8c8] ${i ? 'bg-[#e4e4e8]' : 'bg-white'}" style="width:${w}px">${t}</button>`).join('');

$('#coords').innerHTML = ['X','Y','Z'].map(a =>
  `<div class="flex h-[8px] items-center"><label for="c${a}" class="w-[8px]">${a}</label><input id="c${a}" value="0.000" class="h-[8px] w-[26px] bg-[#e6e6f2] px-[2px] text-right"><span class="flex w-[5px] flex-col items-center gap-px bg-[#e6e6f2] py-px"><svg class="size-[2px] rotate-180"><use href="#i-down"/></svg><svg class="size-[2px]"><use href="#i-down"/></svg></span><svg class="mx-px size-[3px]"><use href="#i-right"/></svg><span class="ml-[2px]">[m]</span></div>`).join('');
</script>
</body>
</html>
